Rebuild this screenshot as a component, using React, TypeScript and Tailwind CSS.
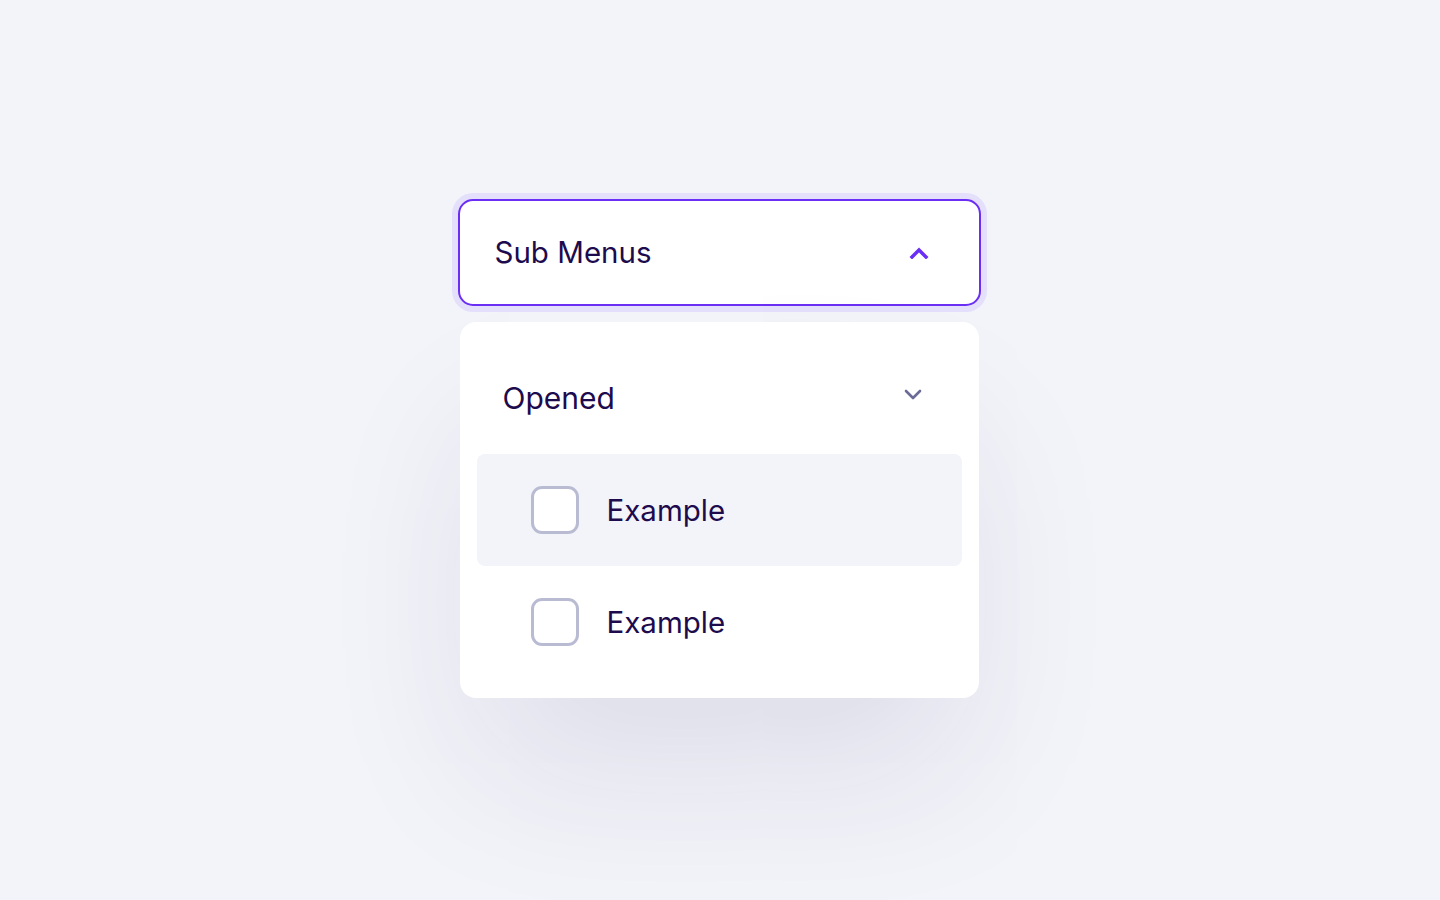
import { useState } from "react";

function ChevronUp() {
  return (
    <svg width="20" height="12" viewBox="0 0 20 12" fill="none">
      <path d="M3 10L10 3L17 10" stroke="#6b2ef5" strokeWidth="3.5" strokeLinecap="square" />
    </svg>
  );
}

function ChevronDown() {
  return (
    <svg width="18" height="12" viewBox="0 0 18 12" fill="none">
      <path d="M2 3L9 10L16 3" stroke="#6b6b98" strokeWidth="2.6" strokeLinecap="round" strokeLinejoin="round" />
    </svg>
  );
}

function Row({ label, active }: { label: string; active?: boolean }) {
  return (
    <div className={`flex h-[112px] items-center rounded-lg pl-[54px] ${active ? "bg-[#f3f4f9]" : ""}`}>
      <div className="h-12 w-12 rounded-[11px] border-[3.5px] border-[#b9bbd3] bg-white" />
      <span className="ml-7 text-[29.5px] text-[#1d0b4e]">{label}</span>
    </div>
  );
}

export default function App() {
  const [open] = useState(true);

  return (
    <div className="flex min-h-screen justify-center bg-[#f3f4f9] pr-[2px] pt-[199px]" style={{ fontFamily: "Inter, 'Noto Sans', sans-serif" }}>
      <div className="flex w-[523px] flex-col items-center">
        <button className="flex h-[107px] w-full items-center justify-between rounded-[15px] border-2 border-[#6b2ef5] bg-white pl-[35px] pr-[50px] shadow-[0_0_0_6px_#e4e0fb]">
          <span className="text-[29.5px] text-[#1d0b4e]">Sub Menus</span>
          <ChevronUp />
        </button>

        {open && (
          <div className="mt-4 w-[519px] rounded-2xl bg-white px-[17px] py-5 shadow-[0_90px_160px_-20px_rgba(40,40,100,0.11)]">
            <div className="flex h-[112px] items-center justify-between pl-[26px] pr-[40px]">
              <span className="text-[30px] text-[#1d0b4e]">Opened</span>
              <div className="-mt-2">
                <ChevronDown />
              </div>
            </div>
            <Row label="Example" active />
            <Row label="Example" />
          </div>
        )}
      </div>
    </div>
  );
}
